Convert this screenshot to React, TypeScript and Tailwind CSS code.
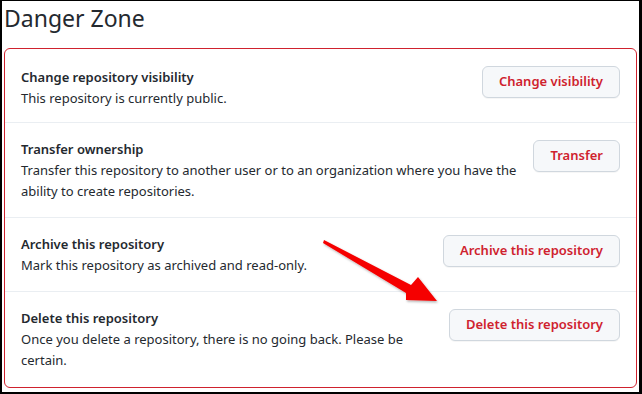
import React from "react";

const rows = [
  {
    title: "Change repository visibility",
    text: "This repository is currently public.",
    button: "Change visibility",
    pad: "pt-[18px] pb-[13px]",
  },
  {
    title: "Transfer ownership",
    text: "Transfer this repository to another user or to an organization where you have the ability to create repositories.",
    button: "Transfer",
    pad: "pt-4 pb-[15px] border-t border-[#eaeef2]",
  },
  {
    title: "Archive this repository",
    text: "Mark this repository as archived and read-only.",
    button: "Archive this repository",
    pad: "pt-4 pb-[15px] border-t border-[#eaeef2]",
  },
  {
    title: "Delete this repository",
    text: "Once you delete a repository, there is no going back. Please be certain.",
    button: "Delete this repository",
    pad: "pt-4 pb-4 border-t border-[#eaeef2]",
  },
];

const Arrow = () => (
  <svg
    className="absolute left-[316px] top-[234px] pointer-events-none"
    width="130"
    height="76"
    viewBox="316 234 130 76"
  >
    <defs>
      <filter id="sh" x="-20%" y="-20%" width="140%" height="140%">
        <feDropShadow dx="1" dy="1.5" stdDeviation="1.2" floodColor="#000" floodOpacity="0.3" />
      </filter>
    </defs>
    <polygon
      points="322,239 409,284 416,276 435,300 404,299 404,292 321,242"
      fill="#f50000"
      filter="url(#sh)"
    />
  </svg>
);

export default function App() {
  return (
    <div
      className="relative w-[642px] h-[394px] bg-white border-t border-l-2 border-r-[3px] border-b-2 border-black overflow-hidden text-[#24292f]"
      style={{ fontFamily: '"Noto Sans", "Open Sans", Arial, sans-serif' }}
    >
      <h2 className="text-[23px] leading-[32px] font-normal pl-[2px] pt-[1px] h-[47px]">Danger Zone</h2>
      <div className="ml-[2px] w-[633px] border border-[#cf222e] rounded-[6px]">
        {rows.map((r, i) => (
          <div key={i} className={"flex items-start px-4 " + r.pad}>
            <div className="flex-1 pr-4 text-[13px] leading-[21px]">
              <div className="font-semibold">{r.title}</div>
              <div>{r.text}</div>
            </div>
            <button
              className={
                "h-[32px] px-4 rounded-[6px] border border-[#d0d7de] bg-[#f6f8fa] text-[#cf222e] text-[13px] font-semibold whitespace-nowrap shadow-[0_1px_0_rgba(27,31,36,0.04)] " +
                (i === 0 ? "-mt-px" : "mt-[1px]")
              }
            >
              {r.button}
            </button>
          </div>
        ))}
      </div>
      <Arrow />
    </div>
  );
}
